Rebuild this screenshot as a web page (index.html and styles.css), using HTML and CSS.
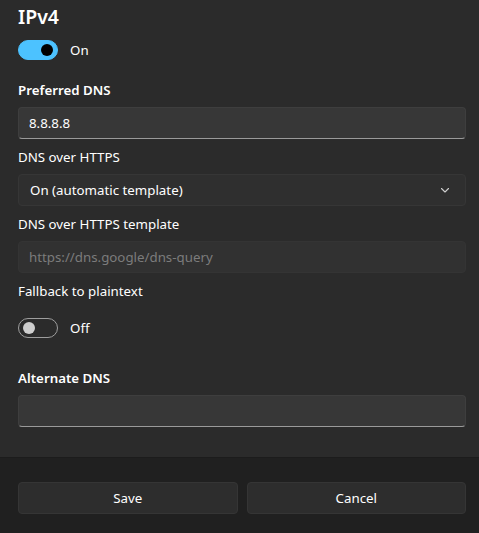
FILE: index.html
```html
<!DOCTYPE html>
<html lang="en">
<head>
<meta charset="UTF-8" />
<meta name="viewport" content="width=device-width, initial-scale=1.0" />
<title>Edit DNS settings</title>
<link rel="stylesheet" href="styles.css">
</head>
<body>
  <div class="panel">
    <h1 class="title">IPv4</h1>
    <label class="toggle-row">
      <span class="toggle on"><span class="knob"></span></span>
      <span>On</span>
    </label>

    <div class="label strong first">Preferred DNS</div>
    <div class="field"><input type="text" value="8.8.8.8"></div>

    <div class="label">DNS over HTTPS</div>
    <div class="select">
      <span>On (automatic template)</span>
      <svg width="12" height="12" viewBox="0 0 12 12"><path d="M2.5 4.5 L6 8 L9.5 4.5" fill="none" stroke="#cfcfcf" stroke-width="1.1" stroke-linecap="round" stroke-linejoin="round"/></svg>
    </div>

    <div class="label">DNS over HTTPS template</div>
    <div class="field disabled"><input type="text" value="https://dns.google/dns-query" disabled></div>

    <div class="label">Fallback to plaintext</div>
    <label class="toggle-row spaced">
      <span class="toggle"><span class="knob"></span></span>
      <span>Off</span>
    </label>

    <div class="label strong alt">Alternate DNS</div>
    <div class="field"><input type="text" value=""></div>
  </div>

  <div class="footer">
    <button>Save</button>
    <button>Cancel</button>
  </div>
</body>
</html>
```

FILE: styles.css
```css
body {
  margin: 0;
  font-family: 'Segoe UI', 'Noto Sans', sans-serif;
  background: #202020;
  color: #fff;
  font-size: 13.3px;
}
.panel {
  background: #2b2b2b;
  padding: 3px 13px 30px 18px;
  border-bottom: 1px solid #1c1c1c;
}
.title {
  font-size: 19.5px;
  font-weight: 600;
  line-height: 28px;
  margin: 0 0 9px;
}
.toggle-row {
  display: flex;
  align-items: center;
  gap: 12px;
  height: 20px;
}
.toggle-row.spaced {
  margin-top: 17px;
}
.toggle {
  width: 40px;
  height: 20px;
  box-sizing: border-box;
  border-radius: 10px;
  border: 1px solid #9d9d9d;
  position: relative;
}
.toggle .knob {
  position: absolute;
  width: 12px;
  height: 12px;
  border-radius: 50%;
  background: #cecece;
  top: 3px;
  left: 4px;
}
.toggle.on {
  background: #4cc2ff;
  border-color: #4cc2ff;
}
.toggle.on .knob {
  background: #000;
  left: 22px;
}
.label {
  line-height: 20px;
  margin: 8px 0 7px;
}
.label.strong {
  font-weight: 600;
}
.label.first {
  margin-top: 20px;
}
.label.alt {
  margin-top: 30px;
}
.field, .select {
  height: 32px;
  box-sizing: border-box;
  background: #373737;
  border: 1px solid #3e3e3e;
  border-bottom: 1px solid #9a9a9a;
  border-radius: 4px;
}
.field input {
  width: 100%;
  height: 100%;
  box-sizing: border-box;
  background: transparent;
  border: none;
  outline: none;
  color: #fff;
  font: inherit;
  padding: 0 10px;
}
.field.disabled {
  background: #313131;
  border-color: #343434;
}
.field.disabled input {
  color: #7c7c7c;
}
.select {
  background: #2f2f2f;
  border: 1px solid #363636;
  display: flex;
  align-items: center;
  justify-content: space-between;
  padding: 0 14px 0 11px;
}
.footer {
  display: grid;
  grid-template-columns: 1fr 1fr;
  gap: 9px;
  padding: 24px 13px 20px 18px;
}
.footer button {
  height: 32px;
  background: #2d2d2d;
  border: 1px solid #353535;
  border-radius: 4px;
  color: #fff;
  font: inherit;
}
```
